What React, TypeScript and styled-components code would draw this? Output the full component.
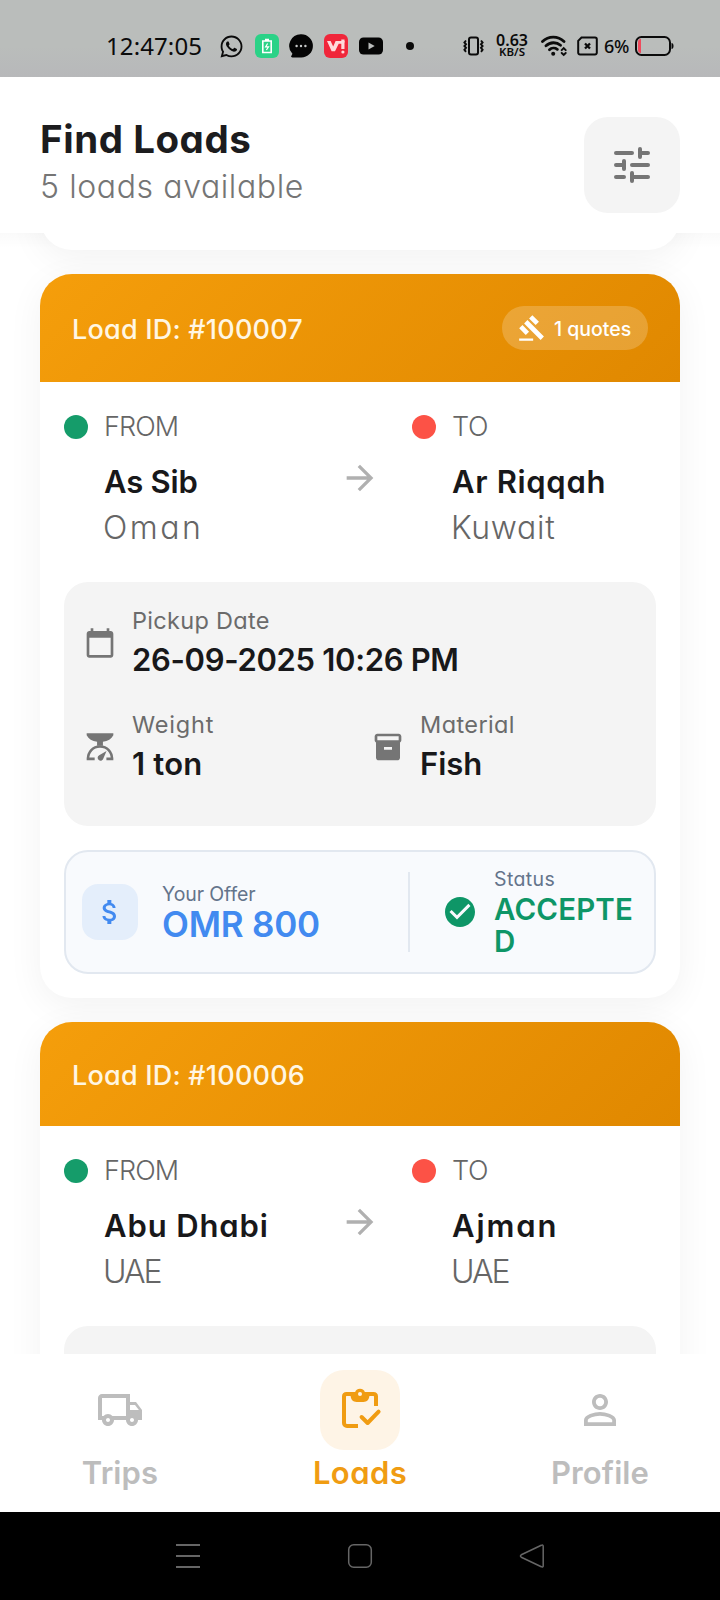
import React from "react";
import styled, { createGlobalStyle, css } from "styled-components";
import {
  MdArrowForward,
  MdAttachMoney,
  MdCalendarToday,
  MdCheckCircle,
  MdGavel,
  MdInventory2,
  MdOutlineLocalShipping,
  MdPersonOutline,
} from "react-icons/md";
import { FaWhatsapp } from "react-icons/fa";

const GlobalStyle = createGlobalStyle`
  * { box-sizing: border-box; }
  body {
    margin: 0;
    background: #fff;
    font-family: Inter, "Liberation Sans", sans-serif;
    font-feature-settings: "cv11";
  }
  svg { display: block; flex: none; }
`;

/* ---------- Shell ---------- */

const Screen = styled.div`
  display: flex;
  flex-direction: column;
  width: 720px;
  height: 1600px;
  overflow: hidden;
  background: #fff;
`;

const tracked = css<{ $track?: number }>`
  letter-spacing: ${(p) => p.$track ?? 0}px;
  white-space: nowrap;
`;

/* ---------- Status bar ---------- */

const StatusBar = styled.div`
  display: flex;
  align-items: center;
  flex: none;
  height: 77px;
  padding: 15px 46px 0 106px;
  background: linear-gradient(#babdbb 60%, #b7b8ba);
  color: #0b0b0b;
  font-family: "Noto Sans", sans-serif;
  font-feature-settings: normal;
`;

const Clock = styled.div`
  width: 113px;
  font-size: 24px;
  line-height: 30px;
  letter-spacing: 0.1px;
  white-space: nowrap;
`;

const AppIcons = styled.div`
  display: flex;
  align-items: center;
  gap: 10.67px;
`;

const AppTile = styled.div<{ $color: string }>`
  display: flex;
  align-items: center;
  justify-content: center;
  width: 24px;
  height: 24px;
  border-radius: 6px;
  background: ${(p) => p.$color};
`;

const MoreDot = styled.div`
  width: 8px;
  height: 8px;
  margin-left: 23px;
  border-radius: 50%;
  background: #0b0b0b;
`;

const SystemIcons = styled.div`
  display: flex;
  align-items: center;
  gap: 6px;
  margin-left: auto;
`;

const NetSpeed = styled.div`
  width: 32px;
  margin: 0 7px 0 6px;
  padding-bottom: 1px;
  text-align: center;
  font-weight: 600;
  font-size: 16px;
  line-height: 13px;
  white-space: nowrap;
`;

const NetUnit = styled.div`
  font-size: 11.5px;
  line-height: 10px;
`;

const Wifi = styled.div`
  margin-right: 4px;
`;

const BatteryText = styled.div`
  width: 25px;
  padding-bottom: 1px;
  font-weight: 500;
  font-size: 18px;
  line-height: 24px;
  letter-spacing: -0.3px;
`;

/* ---------- Header ---------- */

const Header = styled.header`
  display: flex;
  justify-content: space-between;
  flex: none;
  height: 156px;
  padding: 40px 40px 20px;
  background: #fff;
`;

const Title = styled.h1`
  margin: 0;
  color: #1c1c1e;
  font-size: 38.5px;
  font-weight: 700;
  line-height: 44px;
  ${tracked}
`;

const Subtitle = styled.div`
  color: #757575;
  font-size: 32px;
  font-weight: 300;
  line-height: 52px;
  ${tracked}
`;

const FilterButton = styled.button`
  display: flex;
  align-items: center;
  justify-content: center;
  width: 96px;
  height: 96px;
  padding: 0;
  border: 0;
  border-radius: 24px;
  background: #f4f4f4;
  color: #757575;
`;

/* ---------- Load list ---------- */

const LoadList = styled.main`
  display: flex;
  flex-direction: column;
  gap: 24px;
  height: 1121px;
  flex: none;
  padding: 0 40px;
  overflow: hidden;
  background: linear-gradient(rgba(0, 0, 0, 0.02), transparent 16px);
`;

const Card = styled.article`
  flex: none;
  border-radius: 32px;
  background: #fff;
  box-shadow: 0 8px 36px rgba(0, 0, 0, 0.055);
`;

const CardTail = styled(Card)`
  height: 120px;
  margin-top: -103px;
`;

const CardHeader = styled.div<{ $height: number }>`
  display: flex;
  align-items: center;
  justify-content: space-between;
  height: ${(p) => p.$height}px;
  padding: 0 32px;
  border-radius: 32px 32px 0 0;
  background: linear-gradient(135deg, #f59e0b, #e08800);
`;

const LoadId = styled.div`
  padding-top: 3px;
  color: #fff6e3;
  font-size: 27px;
  font-weight: 500;
  line-height: 36px;
  ${tracked}
`;

const QuoteBadge = styled.div`
  display: flex;
  align-items: center;
  gap: 8px;
  height: 44px;
  width: 146px;
  padding-left: 16px;
  border-radius: 22px;
  background: rgba(255, 255, 255, 0.2);
  color: #fff;
`;

const QuoteCount = styled.span`
  padding-top: 2px;
  font-size: 19.5px;
  font-weight: 500;
  line-height: 24px;
  ${tracked}
`;

const CardBody = styled.div`
  padding: 24px;
`;

const Route = styled.div`
  display: flex;
  align-items: center;
  gap: 32px;
  margin-bottom: 32px;
  color: #b0b0b0;
`;

const Stop = styled.div`
  flex: 1;
`;

const StopLabel = styled.div`
  display: flex;
  align-items: center;
  gap: 16px;
  height: 41px;
  margin-bottom: 11px;
  color: #666;
  font-size: 27px;
  font-weight: 300;
  ${tracked}
`;

const Dot = styled.span<{ $color: string }>`
  width: 24px;
  height: 24px;
  border-radius: 50%;
  background: ${(p) => p.$color};
`;

const City = styled.div`
  padding-left: 40px;
  color: #18181a;
  font-size: 31px;
  font-weight: 600;
  line-height: 48px;
  ${tracked}
`;

const Country = styled.div`
  padding-left: 39px;
  color: #666;
  font-size: 32px;
  font-weight: 300;
  line-height: 44px;
  ${tracked}
`;

const Details = styled.div`
  display: grid;
  grid-template-columns: 1fr 1fr;
  gap: 22px 24px;
  height: 244px;
  padding: 20px 20px 38px;
  border-radius: 24px;
  background: #f4f4f4;
`;

const Detail = styled.div<{ $wide?: boolean }>`
  display: flex;
  align-items: center;
  gap: 16px;
  height: 82px;
  color: #757575;
  ${(p) => p.$wide && "grid-column: 1 / -1;"}
`;

const DetailText = styled.div`
  padding-bottom: 5px;
`;

const DetailLabel = styled.div`
  color: #6b6b6b;
  font-size: 23.5px;
  font-weight: 400;
  line-height: 38px;
  ${tracked}
`;

const DetailValue = styled.div`
  color: #18181a;
  font-size: 31px;
  font-weight: 600;
  line-height: 39px;
  ${tracked}
`;

const OfferBox = styled.div`
  display: flex;
  align-items: center;
  height: 124px;
  margin-top: 24px;
  padding: 0 16px;
  border: 2px solid #e2e8f0;
  border-radius: 24px;
  background: #f8fafd;
`;

const OfferCell = styled.div`
  display: flex;
  align-items: center;
  flex: 1;
  gap: 24px;
`;

const OfferIcon = styled.div`
  display: flex;
  align-items: center;
  justify-content: center;
  width: 56px;
  height: 56px;
  border-radius: 16px;
  background: #e4eefb;
  color: #428af0;
`;

const OfferDivider = styled.div`
  width: 2px;
  height: 80px;
  background: #e2e8f0;
`;

const StatusCell = styled.div`
  display: flex;
  align-items: center;
  gap: 16px;
  width: 228px;
  padding-left: 32px;
  color: #0e9667;
`;

const OfferLabel = styled.div`
  color: #64748b;
  font-size: 19.5px;
  line-height: 24px;
  ${tracked}
`;

const OfferAmount = styled.div`
  color: #428af0;
  font-size: 35px;
  font-weight: 600;
  line-height: 36px;
  ${tracked}
`;

const StatusValue = styled.div`
  width: 144px;
  margin-top: 2px;
  font-size: 29.5px;
  font-weight: 600;
  line-height: 32px;
  letter-spacing: 0.14px;
  word-break: break-all;
`;

/* ---------- Bottom navigation ---------- */

const TabBar = styled.nav`
  display: flex;
  flex: none;
  height: 158px;
  padding-top: 16px;
  background: #fff;
`;

const Tab = styled.div<{ $active?: boolean }>`
  display: flex;
  flex-direction: column;
  align-items: center;
  flex: 1;
  color: ${(p) => (p.$active ? "#f09c12" : "#bdbdbd")};
`;

const TabIcon = styled.div<{ $active?: boolean }>`
  display: flex;
  align-items: center;
  justify-content: center;
  width: 80px;
  height: 80px;
  border-radius: 24px;
  background: ${(p) => (p.$active ? "#fef4e6" : "transparent")};
`;

const TabLabel = styled.div`
  font-size: 31px;
  font-weight: 600;
  line-height: 45px;
  ${tracked}
`;

const SystemNav = styled.div`
  display: flex;
  align-items: center;
  justify-content: center;
  gap: 144px;
  flex: none;
  height: 88px;
  background: #000;
`;

/* ---------- Drawn icons ---------- */

const TuneIcon = () => (
  <svg width="48" height="48" viewBox="0 0 24 24" fill="none" stroke="currentColor" strokeWidth="2" strokeLinecap="round">
    <path d="M4 6h8M17 6h3M4 12h4M12 12h8M4 18h4M12 18h8" />
    <path d="M16 4v4M8 10v4M12 16v4" />
  </svg>
);

const ClipboardCheckIcon = ({ size }: { size: number }) => (
  <svg width={size} height={size} viewBox="0 0 24 24" fill="none" stroke="currentColor" strokeWidth="2" strokeLinejoin="round">
    <path d="M11 20H5.500A1.500 1.500 0 0 1 4 18.500V5.300C4 4.500 4.500 4 5.300 4h13.400c.8 0 1.300.5 1.300 1.300V10" />
    <path
      d="M7.300 3.300h2.200a2.600 2.600 0 0 1 5 0h2.200v1.500c0 1.900-1.200 3.200-3 3.200h-3.400c-1.800 0-3-1.300-3-3.200z"
      fill="currentColor"
      stroke="none"
    />
    <circle cx="12" cy="4" r="1" fill="#fef4e6" stroke="none" />
    <path d="M12.800 15.500l3 3 5.500-5.700" strokeLinecap="round" />
  </svg>
);

const ScaleIcon = () => (
  <svg width="32" height="32" viewBox="0 0 24 24" fill="currentColor">
    <path d="M2 1.700h20v1.400C20.500 6 18 7.500 14.200 8v3H9.800V8C6 7.500 3.500 6 2 3.100z" />
    <path d="M3 21c0-5.500 3.600-9.300 9-9.300s9 3.800 9 9.300M2 20.900h6M16.800 20.900H22" fill="none" stroke="currentColor" strokeWidth="1.900" />
    <path d="M16.900 15l-2.300 5.400a2.200 2.200 0 1 1-3.200-2.300z" />
  </svg>
);

const BatteryTileIcon = () => (
  <svg width="12" height="16" viewBox="0 0 12 16" fill="none" stroke="#fff" strokeWidth="1.600">
    <path d="M1.800 3h8.400v11.500H1.800zM4 1.500h4" />
    <path d="M6.600 5.500L4.600 8.900h2.900L5.400 12" strokeWidth="1.200" />
  </svg>
);

const ChatIcon = () => (
  <svg width="24" height="24" viewBox="0 0 24 24">
    <path d="M12.300.3a11.600 11.600 0 1 1 0 23.200H3.500c-1.600 0-1.800-1-.8-2.200l.7-1.500A11.600 11.600 0 0 1 12.300.3z" fill="#050505" />
    <g fill="#c8cac9">
      <circle cx="7.600" cy="12" r="1.200" />
      <circle cx="12" cy="12" r="1.200" />
      <circle cx="16.400" cy="12" r="1.200" />
    </g>
  </svg>
);

const ViIcon = () => (
  <svg width="20" height="18" viewBox="0 0 20 18" fill="#ffd9dc">
    <path d="M1 4h3.600l2.600 5.500L9.600 4H18.500v8h-3.200V6.800h-2.600L9 14.200H5.600z" />
    <path d="M15.300 2.500h3.200v3h-3.200z" />
    <circle cx="16.900" cy="15" r="1.600" />
  </svg>
);

const VideoIcon = () => (
  <svg width="24" height="24" viewBox="0 0 24 24">
    <rect x="0" y="3.500" width="24" height="17" rx="4.500" fill="#050505" />
    <path d="M9.500 8.500l6.200 3.500-6.200 3.500z" fill="#bbbdbc" />
  </svg>
);

const VibrateIcon = () => (
  <svg width="21" height="20" viewBox="0 0 21 20" fill="none" stroke="#0b0b0b" strokeWidth="2">
    <rect x="6" y="1.500" width="9" height="17" rx="2" />
    <path d="M3 4.500l-1.600 2L3 8.300 1.400 10 3 11.800l-1.600 2L3 15.800M18 4.500l1.600 2L18 8.300l1.600 1.700-1.600 1.800 1.600 2-1.600 2" strokeWidth="1.900" />
  </svg>
);

const WifiIcon = () => (
  <svg width="26" height="22" viewBox="0 0 26 22" fill="none" stroke="#0b0b0b" strokeWidth="2.800" strokeLinecap="round">
    <path d="M1.500 6.500C7.500.6 17 .6 23 6.500M5 10.800c4.200-4 10.500-4 14.500-.5M8.500 14.800c2-2 5.500-2.200 7.800-.5" />
    <circle cx="12.200" cy="18.800" r="2" fill="#0b0b0b" stroke="none" />
    <path d="M20.700 15.200l2-2 2 2M20.700 18l2 2 2-2" strokeWidth="1.900" />
  </svg>
);

const SimIcon = () => (
  <svg width="21" height="20" viewBox="0 0 21 20" fill="none" stroke="#0b0b0b" strokeWidth="2">
    <path d="M4.500 1.500H18a1.800 1.800 0 0 1 1.800 1.800v13.400a1.800 1.800 0 0 1-1.800 1.800H3a1.800 1.800 0 0 1-1.800-1.800V4.800z" />
    <path d="M8 7.500l5 5M13 7.500l-5 5" strokeWidth="2.300" />
  </svg>
);

const BatteryIcon = () => (
  <svg width="39" height="20" viewBox="0 0 39 20">
    <rect x="1" y="1" width="34" height="18" rx="5.500" fill="none" stroke="#0b0b0b" strokeWidth="2" />
    <path d="M6 3v14C3.800 17 3 16 3 13.500v-7C3 4 3.800 3 6 3z" fill="#ef4a5c" />
    <path d="M36.500 7c1.500.3 2 1.200 2 3s-.5 2.700-2 3z" fill="#0b0b0b" />
  </svg>
);

const RecentsIcon = () => (
  <svg width="28" height="28" viewBox="0 0 28 28" stroke="#666" strokeWidth="1.800">
    <path d="M2 3h24M2 14h24M2 25h24" />
  </svg>
);

const HomeIcon = () => (
  <svg width="28" height="28" viewBox="0 0 28 28" fill="none" stroke="#666" strokeWidth="1.500">
    <rect x="2.700" y="2.700" width="22.600" height="22.600" rx="5" />
  </svg>
);

const BackIcon = () => (
  <svg width="28" height="28" viewBox="0 0 28 28" fill="none" stroke="#666" strokeWidth="1.500" strokeLinejoin="round">
    <path d="M23.300 3.300c1.200-.7 1.900-.3 1.900 1v19.400c0 1.300-.7 1.700-1.900 1L3.300 15.200c-1.100-.7-1.100-1.700 0-2.400z" />
  </svg>
);

/* ---------- Data ---------- */

/** A text with the tracking that it is set in. */
type Text = { text: string; track: number };
type Place = { city: Text; country: Text };

interface Load {
  id: Text;
  quotes?: Text;
  from: Place;
  to: Place;
  details?: { pickup: Text; weight: Text; material: Text };
  offer?: { amount: Text; status: string };
}

const t = (text: string, track = 0): Text => ({ text, track });

const loads: Load[] = [
  {
    id: t("Load ID: #100007", 0.22),
    quotes: t("1 quotes", 0),
    from: { city: t("As Sib", -0.2), country: t("Oman", 2.5) },
    to: { city: t("Ar Riqqah", 0.67), country: t("Kuwait", 0.7) },
    details: { pickup: t("26-09-2025 10:26 PM", -0.33), weight: t("1 ton", 0.2), material: t("Fish", 0) },
    offer: { amount: t("OMR 800", -0.22), status: "ACCEPTED" },
  },
  {
    id: t("Load ID: #100006", 0.22),
    from: { city: t("Abu Dhabi", 0.87), country: t("UAE", -2) },
    to: { city: t("Ajman", 1.9), country: t("UAE", -2) },
  },
];

const tabs = [
  { label: t("Trips", 0.1), Icon: MdOutlineLocalShipping, active: false },
  { label: t("Loads", 0.4), Icon: ClipboardCheckIcon, active: true },
  { label: t("Profile", 0.1), Icon: MdPersonOutline, active: false },
];

/* ---------- Parts ---------- */

const StopInfo = ({ label, color, place }: { label: Text; color: string; place: Place }) => (
  <Stop>
    <StopLabel $track={label.track}>
      <Dot $color={color} />
      {label.text}
    </StopLabel>
    <City $track={place.city.track}>{place.city.text}</City>
    <Country $track={place.country.track}>{place.country.text}</Country>
  </Stop>
);

const DetailItem = ({ icon, label, value, wide }: { icon: React.ReactNode; label: Text; value: Text; wide?: boolean }) => (
  <Detail $wide={wide}>
    {icon}
    <DetailText>
      <DetailLabel $track={label.track}>{label.text}</DetailLabel>
      <DetailValue $track={value.track}>{value.text}</DetailValue>
    </DetailText>
  </Detail>
);

const LoadCard = ({ load }: { load: Load }) => (
  <Card>
    <CardHeader $height={load.quotes ? 108 : 104}>
      <LoadId $track={load.id.track}>{load.id.text}</LoadId>
      {load.quotes && (
        <QuoteBadge>
          <MdGavel size={28} />
          <QuoteCount $track={load.quotes.track}>{load.quotes.text}</QuoteCount>
        </QuoteBadge>
      )}
    </CardHeader>
    <CardBody>
      <Route>
        <StopInfo label={t("FROM", -0.9)} color="#159c6a" place={load.from} />
        <MdArrowForward size={40} />
        <StopInfo label={t("TO", -0.4)} color="#fc5246" place={load.to} />
      </Route>
      <Details>
        {load.details && (
          <>
            <DetailItem wide icon={<MdCalendarToday size={32} />} label={t("Pickup Date", 0.3)} value={load.details.pickup} />
            <DetailItem icon={<ScaleIcon />} label={t("Weight", 0.8)} value={load.details.weight} />
            <DetailItem icon={<MdInventory2 size={32} />} label={t("Material", 0.4)} value={load.details.material} />
          </>
        )}
      </Details>
      {load.offer && (
        <OfferBox>
          <OfferCell>
            <OfferIcon>
              <MdAttachMoney size={32} />
            </OfferIcon>
            <div>
              <OfferLabel $track={-0.1}>Your Offer</OfferLabel>
              <OfferAmount $track={load.offer.amount.track}>{load.offer.amount.text}</OfferAmount>
            </div>
          </OfferCell>
          <OfferDivider />
          <StatusCell>
            <MdCheckCircle size={36} />
            <div>
              <OfferLabel $track={0.39}>Status</OfferLabel>
              <StatusValue>{load.offer.status}</StatusValue>
            </div>
          </StatusCell>
        </OfferBox>
      )}
    </CardBody>
  </Card>
);

export default function App() {
  return (
    <Screen>
      <GlobalStyle />
      <StatusBar>
        <Clock>12:47:05</Clock>
        <AppIcons>
          <FaWhatsapp size={25} />
          <AppTile $color="#2bd287">
            <BatteryTileIcon />
          </AppTile>
          <ChatIcon />
          <AppTile $color="#f0263a">
            <ViIcon />
          </AppTile>
          <VideoIcon />
        </AppIcons>
        <MoreDot />
        <SystemIcons>
          <VibrateIcon />
          <NetSpeed>
            0.63
            <NetUnit>KB/S</NetUnit>
          </NetSpeed>
          <Wifi>
            <WifiIcon />
          </Wifi>
          <SimIcon />
          <BatteryText>6%</BatteryText>
          <BatteryIcon />
        </SystemIcons>
      </StatusBar>

      <Header>
        <div>
          <Title $track={0.55}>Find Loads</Title>
          <Subtitle $track={0.6}>5 loads available</Subtitle>
        </div>
        <FilterButton aria-label="Filter">
          <TuneIcon />
        </FilterButton>
      </Header>

      <LoadList>
        <CardTail />
        {loads.map((load) => (
          <LoadCard key={load.id.text} load={load} />
        ))}
      </LoadList>

      <TabBar>
        {tabs.map(({ label, Icon, active }) => (
          <Tab key={label.text} $active={active}>
            <TabIcon $active={active}>
              <Icon size={48} />
            </TabIcon>
            <TabLabel $track={label.track}>{label.text}</TabLabel>
          </Tab>
        ))}
      </TabBar>

      <SystemNav>
        <RecentsIcon />
        <HomeIcon />
        <BackIcon />
      </SystemNav>
    </Screen>
  );
}
